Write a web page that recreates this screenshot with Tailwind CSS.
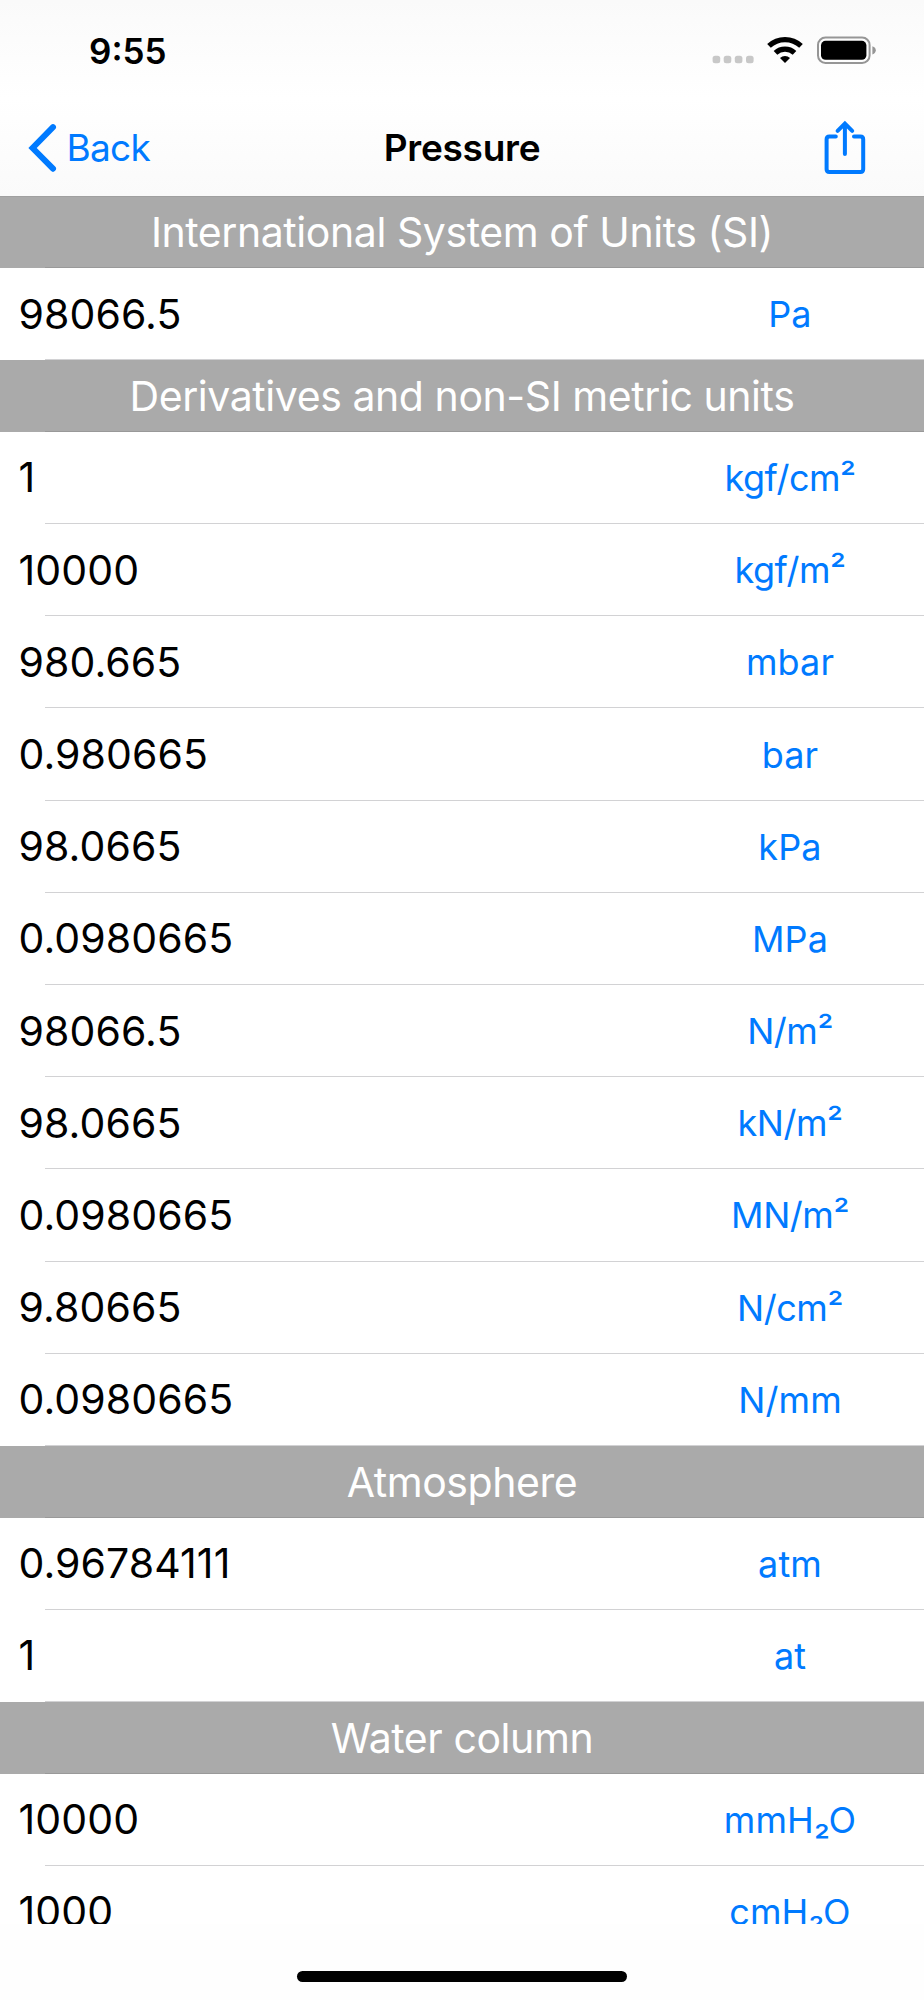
<!DOCTYPE html>
<html lang="en">
  <head>
    <meta charset="UTF-8" />
    <meta name="viewport" content="width=device-width, initial-scale=1.0" />
    <script src="https://cdn.jsdelivr.net/npm/@tailwindcss/browser@4"></script>
    <title>Pressure</title>
  </head>
  <body class="bg-white">
    <div class="w-[924px] h-[2000px] flex flex-col overflow-hidden bg-[#fefefe] font-['Inter',sans-serif] text-black">
      <!-- Top bar -->
      <header class="h-[195.5px] shrink-0 bg-linear-to-b from-[#fafafa] via-white to-[#fafafa]">
        <!-- Status bar -->
        <div class="h-[102px] pl-[89px] pr-[47px] flex items-center justify-between">
          <span class="text-[35px] leading-none font-semibold">9:55</span>
          <svg class="w-[166px] h-[30px]" viewBox="711 36 166 30" fill="none">
            <g fill="#c8c8c8">
              <rect x="712.6" y="55.8" width="7.6" height="7.4" rx="2.5" />
              <rect x="723.7" y="55.8" width="7.6" height="7.4" rx="2.5" />
              <rect x="734.8" y="55.8" width="7.6" height="7.4" rx="2.5" />
              <rect x="746" y="55.8" width="7.6" height="7.4" rx="2.5" />
            </g>
            <path d="M769 45.9A23.4 23.4 0 0 1 801 45.9" stroke="#000" stroke-width="5.3" />
            <path d="M775.5 52.9A13.9 13.9 0 0 1 794.5 52.9" stroke="#000" stroke-width="5.3" />
            <path d="M785 63L780 57.9A7.3 7.3 0 0 1 790 57.9Z" fill="#000" />
            <rect x="818" y="37.6" width="51.6" height="25.3" rx="7.5" stroke="#969696" stroke-width="2" />
            <rect x="821" y="40.8" width="45.4" height="19" rx="4.6" fill="#000" />
            <path d="M872.4 46.2Q875.8 47.4 875.8 50.3T872.4 54.4Z" fill="#969696" />
          </svg>
        </div>
        <!-- Navigation bar -->
        <div class="h-[92px] px-[27px] grid grid-cols-3 items-center">
          <a href="#" class="flex items-center text-[#007aff]">
            <svg class="w-[32px] h-[50px]" viewBox="27 123 32 50" fill="none">
              <path d="M53 127.2L32.6 148L53 168.7" stroke="currentColor" stroke-width="6" stroke-linecap="round" />
            </svg>
            <span class="pl-[7.5px] pb-[2px] text-[37px] leading-none tracking-[-0.7px]">Back</span>
          </a>
          <h1 class="pb-[2px] text-center text-[37px] leading-none font-semibold tracking-[-0.25px]">Pressure</h1>
          <a href="#" class="justify-self-end pr-[31px] text-[#007aff]">
            <svg class="w-[42px] h-[56px]" viewBox="824 120 42 56" fill="none" stroke="currentColor" stroke-width="4" stroke-linecap="round">
              <path d="M835.8 136.4H829.4Q826.6 136.4 826.6 139.2V169.2Q826.6 172 829.4 172H860.4Q863.2 172 863.2 169.2V139.2Q863.2 136.4 860.4 136.4H854" />
              <path d="M844.9 154V124M837.6 130.8L844.9 123.5L852.2 130.8" />
            </svg>
          </a>
        </div>
      </header>

      <!-- Unit list -->
      <main class="list h-[1728.5px] shrink-0 overflow-hidden bg-white border-t border-[#a0a0a0]"></main>

      <!-- Home indicator -->
      <footer class="grow flex justify-center items-end pb-[18px]">
        <div class="w-[330px] h-[11px] rounded-full bg-black"></div>
      </footer>
    </div>

    <script>
      const sections = [
        {
          title: "International System of Units (SI)",
          rows: [["98066.5", "Pa"]],
        },
        {
          title: "Derivatives and non-SI metric units",
          rows: [
            ["1", "kgf/cm²"],
            ["10000", "kgf/m²"],
            ["980.665", "mbar"],
            ["0.980665", "bar"],
            ["98.0665", "kPa"],
            ["0.0980665", "MPa"],
            ["98066.5", "N/m²"],
            ["98.0665", "kN/m²"],
            ["0.0980665", "MN/m²"],
            ["9.80665", "N/cm²"],
            ["0.0980665", "N/mm"],
          ],
        },
        {
          title: "Atmosphere",
          rows: [
            ["0.96784111", "atm"],
            ["1", "at"],
          ],
        },
        {
          title: "Water column",
          rows: [
            ["10000", "mmH₂O"],
            ["1000", "cmH₂O"],
          ],
        },
      ];

      const showRow = ([value, unit]) => {
        // Superscript units are set a little tighter
        const tracking = unit.includes("²") ? "tracking-[-0.45px]" : "tracking-[0.1px]";
        return `
        <div class="h-[92.2px] flex flex-col">
          <div class="grow pl-[18.5px] pt-px flex items-center justify-between">
            <span class="text-[41px] leading-none tracking-[0.1px]">${value}</span>
            <span class="w-[268px] text-center text-[36px] leading-none text-[#007aff] ${tracking}">${unit}</span>
          </div>
          <div class="ml-[45px] h-px shrink-0 bg-[#d2d2d4]"></div>
        </div>`;
      };

      const showSection = (s) => `
        <section>
          <div class="h-[71.6px] flex flex-col bg-[#aaaaaa]">
            <h2 class="grow pt-[2px] flex items-center justify-center text-[41px] leading-none tracking-[-0.43px] text-white">${s.title}</h2>
            <div class="ml-[45px] h-px shrink-0 bg-[#999999]"></div>
          </div>
          ${s.rows.map(showRow).join("")}
        </section>`;

      document.querySelector(".list").innerHTML = sections.map(showSection).join("");
    </script>
  </body>
</html>
